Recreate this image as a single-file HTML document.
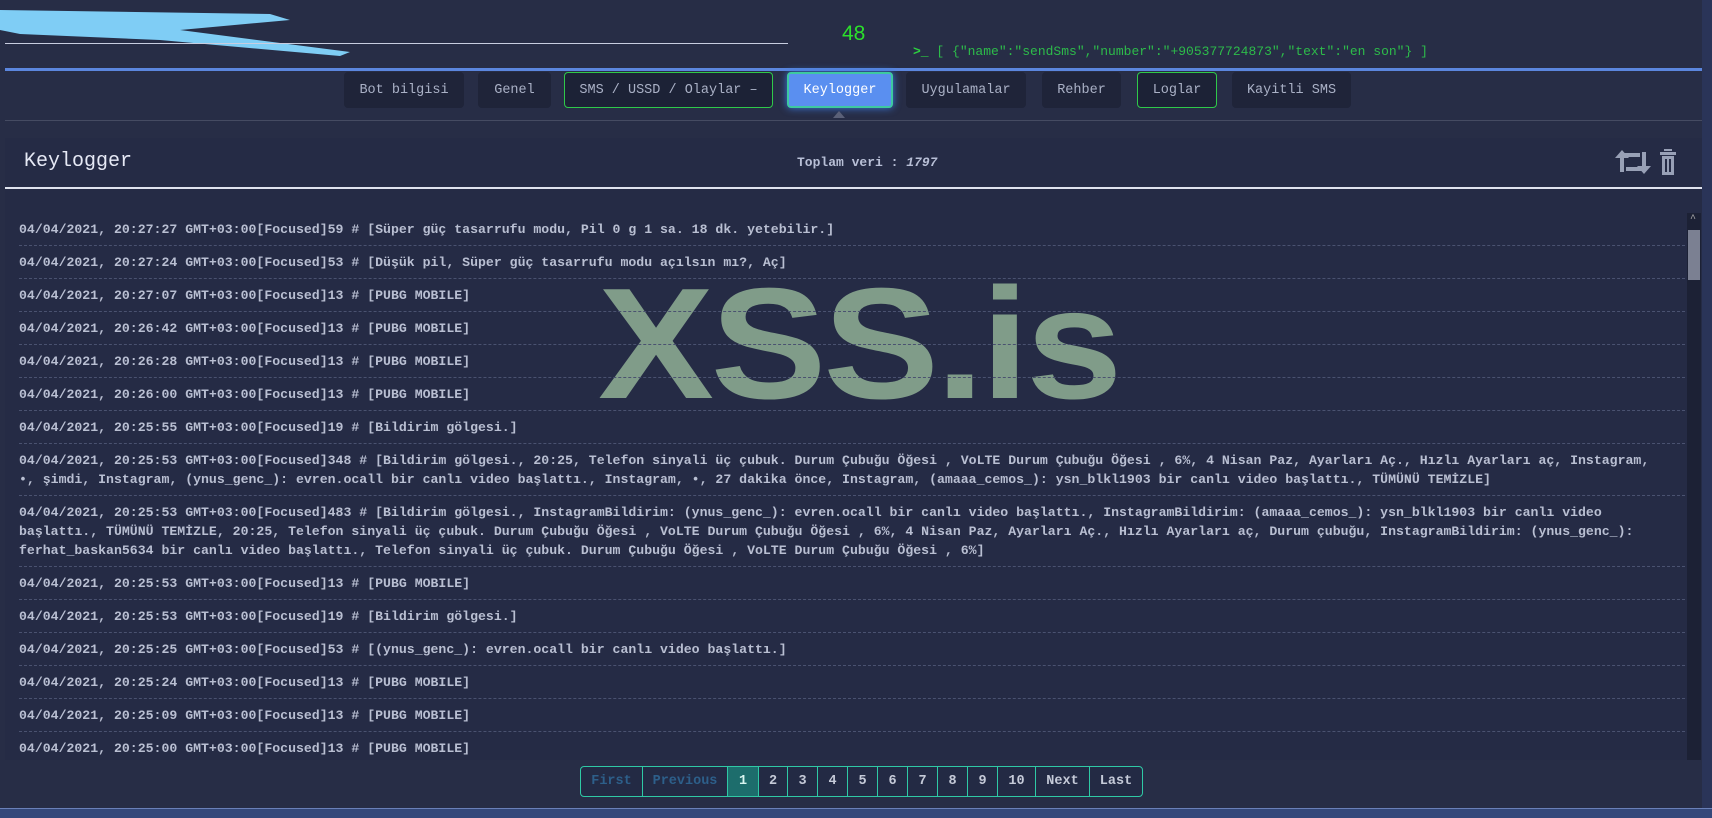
<!DOCTYPE html>
<html><head><meta charset="utf-8"><style>
*{margin:0;padding:0;box-sizing:border-box}
body{width:1712px;height:818px;overflow:hidden;background:#272d46;font-family:"Liberation Mono","DejaVu Sans Mono",monospace;color:#c5cad8;position:relative}
.abs{position:absolute}
.tab{position:absolute;top:72px;height:36px;background:#1f2439;border-radius:4px;color:#aab1c6;font-size:13.5px;display:flex;align-items:center;justify-content:center}
.tab.g{border:1px solid #2fc94a;background:#1c2236}
.tab.a{background:#5a8ff0;color:#fff;border:2px solid #3ec9a0;box-shadow:0 0 8px #3b7be0}
.row{padding:6.5px 0 6.5px 0;border-bottom:1px dashed #4a5270;line-height:19px;font-size:13.2px;color:#b9bfd2;white-space:nowrap;font-weight:bold}
.pg{position:absolute;top:766px;height:31px;border:1.5px solid #2fc9a5;color:#c5cad8;font-size:13.5px;display:flex;align-items:center;justify-content:center;font-weight:bold;background:#232a44}
</style></head><body>
<svg class="abs" style="left:0;top:0" width="360" height="60"><path d="M0 10 L270 14 L290 20 L180 30 L350 52 L340 56 L160 40 L20 34 L0 30Z" fill="#7fcdf5"/></svg>
<div class="abs" style="left:5px;top:43px;width:783px;height:1px;background:#c8cde0"></div>
<div class="abs" style="left:842px;top:22px;font-size:21px;color:#2be02b;font-family:'Liberation Sans',sans-serif">48</div>
<div class="abs" style="left:913px;top:44px;font-size:13px;color:#2dbb4a;white-space:nowrap"><b style="color:#2dd040">&gt;_</b> [ {"name":"sendSms","number":"+905377724873","text":"en son"} ]</div>
<div class="abs" style="left:5px;top:68px;width:1698px;height:3px;background:#5b86de"></div>
<div class="abs" style="left:1702px;top:0;width:10px;height:818px;background:#2a3458"></div>
<div class="tab" style="left:344px;width:120px">Bot bilgisi</div>
<div class="tab" style="left:478px;width:73px">Genel</div>
<div class="tab g" style="left:564px;width:209px">SMS / USSD / Olaylar –</div>
<div class="tab a" style="left:787px;width:106px">Keylogger</div>
<div class="abs" style="left:833px;top:111px;width:0;height:0;border-left:6px solid transparent;border-right:6px solid transparent;border-bottom:7px solid #5a6078"></div>
<div class="tab" style="left:906px;width:120px">Uygulamalar</div>
<div class="tab" style="left:1042px;width:79px">Rehber</div>
<div class="tab g" style="left:1137px;width:80px">Loglar</div>
<div class="tab" style="left:1232px;width:119px">Kayitli SMS</div>
<div class="abs" style="left:5px;top:120px;width:1697px;height:1px;background:#454b62"></div>
<div class="abs" style="left:5px;top:138px;width:1697px;height:670px;background:#252b45"></div>
<div class="abs" style="left:24px;top:150px;font-size:20px;color:#e6e9f5">Keylogger</div>
<div class="abs" style="left:797px;top:155px;font-size:13px;color:#b8bfd6;font-weight:bold">Toplam veri : <i>1797</i></div>
<svg class="abs" style="left:1614px;top:146px" width="74" height="32" viewBox="0 0 74 32">
<g fill="none" stroke="#98a0b6" stroke-width="4"><path d="M8 26 V9 H26"/><path d="M30 6 V23 H12"/></g>
<g fill="#98a0b6"><path d="M1 12 L8 4 L15 12Z"/><path d="M23 20 L30 28 L37 20Z"/>
<path d="M50 3h8v2h-8z M46 6h16v3H46z M48 10h12v19H48z"/></g>
<g fill="#252b45"><rect x="51" y="13" width="2" height="13"/><rect x="55" y="13" width="2" height="13"/></g></svg>
<div class="abs" style="left:5px;top:187px;width:1697px;height:1.5px;background:#dfe3ee"></div>
<div class="abs" style="left:598px;top:265px;font-family:'Liberation Sans',sans-serif;font-weight:bold;font-size:158px;color:#809c89;letter-spacing:-3px;line-height:1;transform:scaleX(1.1);transform-origin:0 0">XSS.is</div>
<div class="abs" style="left:1687px;top:213px;width:14px;height:547px;background:#1c2135"></div>
<div class="abs" style="left:1688px;top:230px;width:12px;height:50px;background:#7b8092"></div>
<div class="abs" style="left:1690px;top:214px;font-size:10px;color:#aaa">^</div>
<div class="abs" style="left:19px;top:213px;width:1666px">
<div class="row">04/04/2021, 20:27:27 GMT+03:00[Focused]59 # [Süper güç tasarrufu modu, Pil 0 g 1 sa. 18 dk. yetebilir.]</div>
<div class="row">04/04/2021, 20:27:24 GMT+03:00[Focused]53 # [Düşük pil, Süper güç tasarrufu modu açılsın mı?, Aç]</div>
<div class="row">04/04/2021, 20:27:07 GMT+03:00[Focused]13 # [PUBG MOBILE]</div>
<div class="row">04/04/2021, 20:26:42 GMT+03:00[Focused]13 # [PUBG MOBILE]</div>
<div class="row">04/04/2021, 20:26:28 GMT+03:00[Focused]13 # [PUBG MOBILE]</div>
<div class="row">04/04/2021, 20:26:00 GMT+03:00[Focused]13 # [PUBG MOBILE]</div>
<div class="row">04/04/2021, 20:25:55 GMT+03:00[Focused]19 # [Bildirim gölgesi.]</div>
<div class="row">04/04/2021, 20:25:53 GMT+03:00[Focused]348 # [Bildirim gölgesi., 20:25, Telefon sinyali üç çubuk. Durum Çubuğu Öğesi , VoLTE Durum Çubuğu Öğesi , 6%, 4 Nisan Paz, Ayarları Aç., Hızlı Ayarları aç, Instagram,<br>•, şimdi, Instagram, (ynus_genc_): evren.ocall bir canlı video başlattı., Instagram, •, 27 dakika önce, Instagram, (amaaa_cemos_): ysn_blkl1903 bir canlı video başlattı., TÜMÜNÜ TEMİZLE]</div>
<div class="row">04/04/2021, 20:25:53 GMT+03:00[Focused]483 # [Bildirim gölgesi., InstagramBildirim: (ynus_genc_): evren.ocall bir canlı video başlattı., InstagramBildirim: (amaaa_cemos_): ysn_blkl1903 bir canlı video<br>başlattı., TÜMÜNÜ TEMİZLE, 20:25, Telefon sinyali üç çubuk. Durum Çubuğu Öğesi , VoLTE Durum Çubuğu Öğesi , 6%, 4 Nisan Paz, Ayarları Aç., Hızlı Ayarları aç, Durum çubuğu, InstagramBildirim: (ynus_genc_):<br>ferhat_baskan5634 bir canlı video başlattı., Telefon sinyali üç çubuk. Durum Çubuğu Öğesi , VoLTE Durum Çubuğu Öğesi , 6%]</div>
<div class="row">04/04/2021, 20:25:53 GMT+03:00[Focused]13 # [PUBG MOBILE]</div>
<div class="row">04/04/2021, 20:25:53 GMT+03:00[Focused]19 # [Bildirim gölgesi.]</div>
<div class="row">04/04/2021, 20:25:25 GMT+03:00[Focused]53 # [(ynus_genc_): evren.ocall bir canlı video başlattı.]</div>
<div class="row">04/04/2021, 20:25:24 GMT+03:00[Focused]13 # [PUBG MOBILE]</div>
<div class="row">04/04/2021, 20:25:09 GMT+03:00[Focused]13 # [PUBG MOBILE]</div>
<div class="row" style="border:none">04/04/2021, 20:25:00 GMT+03:00[Focused]13 # [PUBG MOBILE]</div>
</div>
<div class="abs" style="left:0;top:760px;width:1702px;height:48px;background:#272d46"></div>
<div class="pg" style="left:580px;width:63px;color:#2d5f8a;border-radius:4px 0 0 4px">First</div>
<div class="pg" style="left:642px;width:86px;color:#2d5f8a">Previous</div>
<div class="pg" style="left:727px;width:32px;background:#1d6d6c;color:#d8f5f0">1</div>
<div class="pg" style="left:758px;width:30px">2</div>
<div class="pg" style="left:787px;width:31px">3</div>
<div class="pg" style="left:817px;width:31px">4</div>
<div class="pg" style="left:847px;width:31px">5</div>
<div class="pg" style="left:877px;width:31px">6</div>
<div class="pg" style="left:907px;width:31px">7</div>
<div class="pg" style="left:937px;width:31px">8</div>
<div class="pg" style="left:967px;width:31px">9</div>
<div class="pg" style="left:997px;width:39px">10</div>
<div class="pg" style="left:1035px;width:55px">Next</div>
<div class="pg" style="left:1089px;width:54px;border-radius:0 4px 4px 0">Last</div>
<div class="abs" style="left:0;top:808px;width:1712px;height:10px;background:#34487a;border-top:1px solid #6a80b8"></div>
</body></html>
